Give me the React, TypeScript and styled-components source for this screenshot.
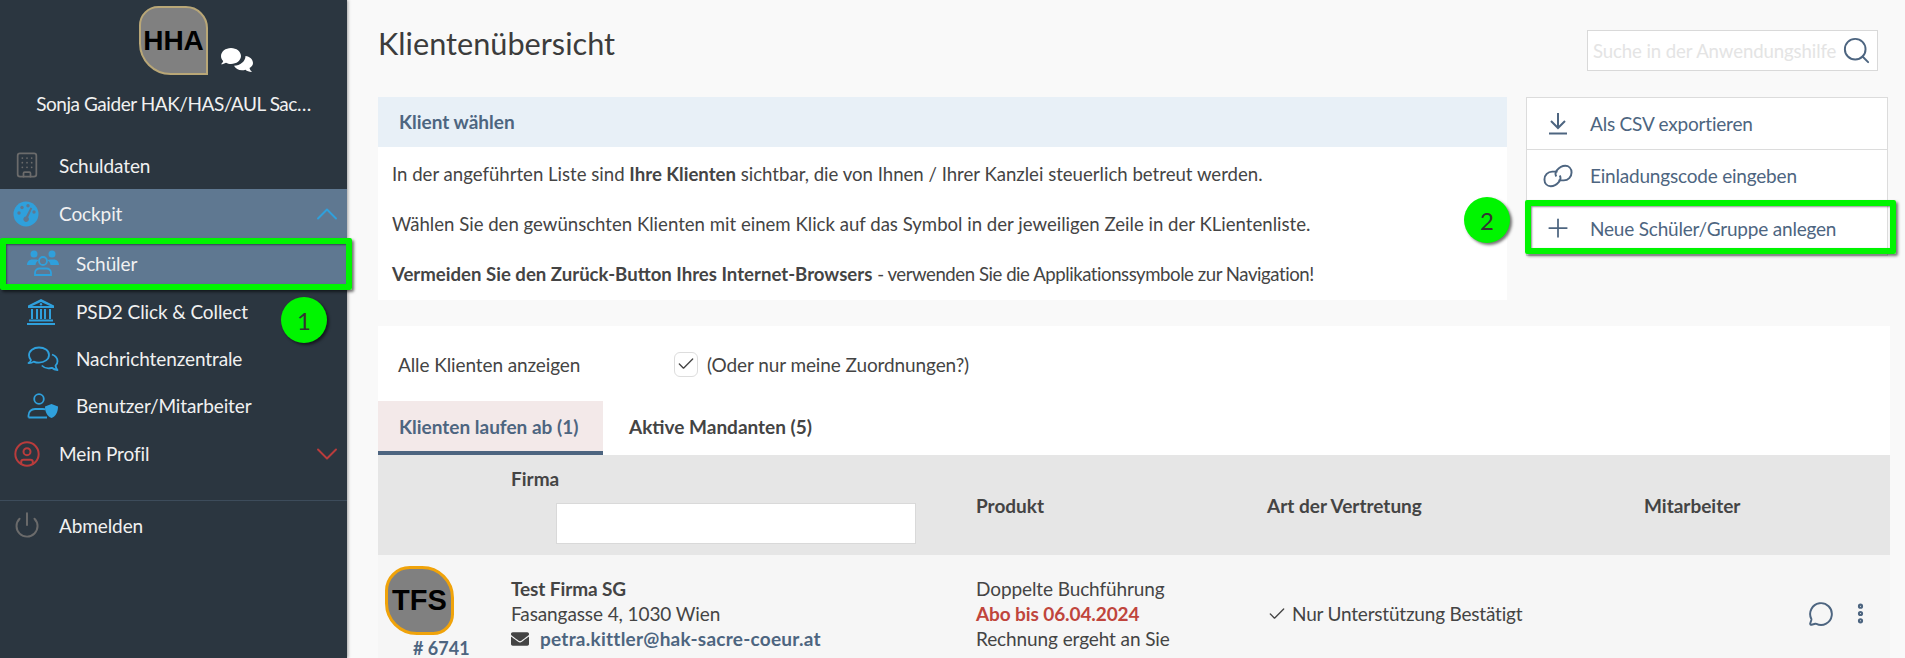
import styled, { createGlobalStyle } from "styled-components";
import {
  Building,
  CircleUser,
  Power,
  ChevronUp,
  ChevronDown,
  Search,
  Plus,
  Check,
  MessageCircle,
  EllipsisVertical,
} from "lucide-react";
import { FaEnvelope } from "react-icons/fa";

const GlobalStyle = createGlobalStyle`
  html, body {
    margin: 0;
    padding: 0;
    height: 658px;
    overflow: hidden;
    background: #f9f9f9;
    font-family: Lato, "Noto Sans", sans-serif;
    font-size: 19px;
    color: #444;
  }
  * { box-sizing: border-box; }
`;

const Page = styled.div`
  display: flex;
  height: 658px;
  overflow: hidden;
  position: relative;
`;

const Sidebar = styled.aside`
  width: 347px;
  flex: none;
  background: #2b3640;
  box-shadow: 1px 0 3px rgba(0, 0, 0, 0.35);
  color: #f1f1f1;
  position: relative;
  letter-spacing: -0.1px;
`;

const Brand = styled.div`
  display: flex;
  flex-direction: column;
  align-items: center;
  height: 141px;
  padding-top: 6px;
`;

const BrandTop = styled.div`
  display: flex;
  align-items: flex-end;
  gap: 12px;
  margin-left: 46px;
`;

const Avatar = styled.div<{ $color: string; $size: number; $fs: number }>`
  width: ${(p) => p.$size}px;
  height: ${(p) => p.$size}px;
  background: #808080;
  border: 2px solid ${(p) => p.$color};
  border-radius: 28% 32% 0 46%;
  display: flex;
  align-items: center;
  justify-content: center;
  font-family: "Liberation Sans", Arial, sans-serif;
  font-weight: 700;
  font-size: ${(p) => p.$fs}px;
  color: #000;
`;

const TfsAvatar = styled(Avatar)`
  border-width: 3px;
  border-radius: 36% 46% 30% 46%;
`;

const BrandName = styled.div`
  margin-top: 16px;
  white-space: nowrap;
  line-height: 26px;
  text-align: center;
  letter-spacing: -0.45px;
`;

const NavRow = styled.div<{ $h: number; $active?: boolean; $sub?: boolean }>`
  height: ${(p) => p.$h}px;
  display: flex;
  align-items: center;
  position: relative;
  padding-left: ${(p) => (p.$sub ? 76 : 59)}px;
  background: ${(p) => (p.$active ? "#5f7891" : "transparent")};
`;

const NavIcon = styled.span<{ $sub?: boolean }>`
  position: absolute;
  left: ${(p) => (p.$sub ? 27 : 13)}px;
  top: 50%;
  transform: translateY(-50%);
  display: flex;
`;

const Caret = styled.span`
  position: absolute;
  right: 2px;
  top: 50%;
  transform: translateY(-50%);
  display: flex;
`;

const NavDivider = styled.div`
  height: 1px;
  background: #3d4c5b;
  margin-top: 22px;
`;

const Main = styled.main`
  flex: 1;
  min-width: 0;
  padding: 0 15px 0 31px;
`;

const TitleRow = styled.div`
  height: 97px;
  display: flex;
  justify-content: space-between;
  align-items: flex-start;
`;

const Title = styled.h1`
  margin: 24px 0 0;
  font-size: 30.7px;
  font-weight: 400;
  line-height: 40px;
  color: #3c3c3c;
`;

const HelpSearch = styled.div`
  margin-top: 30px;
  margin-right: 12px;
  width: 291px;
  height: 41px;
  background: #fff;
  border: 1px solid #d9d9d9;
  display: flex;
  align-items: center;
  justify-content: space-between;
  padding: 0 5px 0 5px;
  color: #e4e4e4;
  font-size: 18.6px;
  letter-spacing: -0.1px;
  white-space: nowrap;
`;

const InfoLayout = styled.div`
  display: flex;
  gap: 19px;
`;

const InfoPanel = styled.section`
  width: 1129px;
  height: 203px;
  background: #fff;
`;

const InfoHeader = styled.div`
  height: 50px;
  background: #e8f0f7;
  display: flex;
  align-items: center;
  padding-left: 21px;
  font-weight: 700;
  color: #4d6580;
  padding-bottom: 1px;
`;

const InfoBody = styled.div`
  padding: 15px 14px 0;
`;

const InfoLine = styled.p`
  margin: 0 0 26px;
  line-height: 24px;
  white-space: nowrap;
  font-size: 18.6px;
`;

const Tight = styled.span`
  letter-spacing: -0.45px;
`;

const ActionMenu = styled.div`
  width: 362px;
  height: 159px;
  background: #fff;
  border: 1px solid #dcdcdc;
  flex: none;
`;

const ActionRow = styled.div`
  height: 52px;
  display: flex;
  align-items: center;
  padding-left: 63px;
  position: relative;
  color: #4d6580;
  border-bottom: 1px solid #dcdcdc;
  letter-spacing: -0.2px;

  &:last-child {
    border-bottom: none;
  }
`;

const ActionIcon = styled.span`
  position: absolute;
  left: 16px;
  width: 30px;
  display: flex;
  justify-content: center;
`;

const ClientCard = styled.section`
  margin-top: 26px;
  background: #fff;
  height: 400px;
`;

const FilterRow = styled.div`
  height: 75px;
  display: flex;
  align-items: center;
  padding: 1px 0 0 20px;
  letter-spacing: -0.1px;
`;

const FilterLabel = styled.span`
  width: 276px;
`;

const CheckBox = styled.span`
  width: 24px;
  height: 25px;
  border: 1px solid #ddd;
  border-radius: 6px;
  display: flex;
  align-items: center;
  justify-content: center;
  margin-right: 9px;
`;

const Tabs = styled.div`
  display: flex;
  height: 54px;
`;

const Tab = styled.div<{ $active?: boolean }>`
  width: ${(p) => (p.$active ? "225px" : "auto")};
  padding: 0 0 ${(p) => (p.$active ? 0 : 4)}px ${(p) => (p.$active ? 21 : 26)}px;
  display: flex;
  align-items: center;
  font-weight: 700;
  white-space: nowrap;
  color: ${(p) => (p.$active ? "#4d6580" : "#444")};
  background: ${(p) => (p.$active ? "#f3e9e9" : "transparent")};
  border-bottom: ${(p) => (p.$active ? "4px solid #4d6580" : "none")};
`;

const columns = "133px 465px 291px 377px 1fr";

const TableHead = styled.div`
  display: grid;
  grid-template-columns: ${columns};
  height: 100px;
  background: #e6e6e6;
  font-weight: 700;
`;

const HeadCell = styled.div<{ $col: number }>`
  grid-column: ${(p) => p.$col};
  display: flex;
  align-items: center;
`;

const FirmaCell = styled.div`
  grid-column: 2;
  padding-top: 12px;
  line-height: 24px;
`;

const FirmaFilter = styled.div`
  width: 360px;
  height: 41px;
  margin: 12px 0 0 45px;
  background: #fff;
  border: 1px solid #d9d9d9;
`;

const TableRow = styled.div`
  display: grid;
  grid-template-columns: ${columns};
  height: 110px;
  background: #f6f6f6;
  line-height: 25px;
`;

const LogoCell = styled.div`
  padding: 11px 0 0 7px;
  position: relative;
`;

const ClientNumber = styled.div`
  position: absolute;
  left: 35px;
  top: 81px;
  color: #4d6580;
  font-weight: 700;
  font-size: 18px;
  white-space: nowrap;
`;

const TextCell = styled.div`
  padding-top: 21px;
  white-space: nowrap;
  letter-spacing: -0.1px;
`;

const Bold = styled.div`
  font-weight: 700;
`;

const Expired = styled.div`
  font-weight: 700;
  color: #c0453c;
`;

const MailLine = styled.div`
  display: flex;
  align-items: center;
  gap: 11px;
  font-weight: 700;
  color: #4d6580;
  letter-spacing: 0.25px;
`;

const VertretungCell = styled.div`
  padding-top: 46px;
  display: flex;
  align-items: flex-start;
  gap: 5px;
  white-space: nowrap;
  letter-spacing: -0.2px;
`;

const CheckMark = styled.span`
  display: flex;
  margin-top: 3px;
`;

const RowActions = styled.div`
  padding: 46px 17px 0 0;
  display: flex;
  justify-content: flex-end;
  gap: 14px;
  color: #4d6580;
`;

const Highlight = styled.div`
  position: absolute;
  border: 6px solid #00f500;
  box-shadow: 2px 2px 3px rgba(0, 0, 0, 0.55), inset 1px 1px 2px rgba(0, 0, 0, 0.45);
  border-radius: 2px;
  pointer-events: none;
`;

const SchuelerHighlight = styled(Highlight)`
  left: 0;
  top: 238px;
  width: 352px;
  height: 52px;
`;

const NeuHighlight = styled(Highlight)`
  left: 1525px;
  top: 200px;
  width: 371px;
  height: 54px;
`;

const Badge = styled.div`
  position: absolute;
  width: 46px;
  height: 46px;
  border-radius: 50%;
  background: #00f500;
  box-shadow: 2px 2px 3px rgba(0, 0, 0, 0.55);
  display: flex;
  align-items: center;
  justify-content: center;
  color: #333;
  font-size: 24px;
`;

const BadgeOne = styled(Badge)`
  left: 281px;
  top: 297px;
`;

const BadgeTwo = styled(Badge)`
  left: 1464px;
  top: 197px;
`;

const BLUE = "#2fa0dc";
const SLATE = "#4d6580";

const Chats = () => (
  <svg width="34" height="28" viewBox="0 0 34 28" fill="#fff">
    <path d="M11 1C5.500 1 1 4.600 1 9c0 1.900.8 3.600 2.200 5-.4 1.300-1.300 2.400-2.200 3.200 1.800 0 3.600-.6 5-1.500 1.500.8 3.200 1.300 5 1.300 5.500 0 10-3.600 10-8S16.500 1 11 1z" />
    <path d="M33 16c0-3.600-3.300-6.600-7.500-7-.1 5.400-5.200 9.600-11.500 9.800 1.300 2.700 4.400 4.500 8 4.500 1.200 0 2.400-.2 3.500-.6 1.500 1.400 3.300 2.100 6.500 2.300-1.200-1-2.200-2.400-2.500-3.900C31.800 19.800 33 18 33 16z" />
  </svg>
);

const GaugeIcon = () => (
  <svg width="26" height="26" viewBox="0 0 26 26">
    <circle cx="13" cy="13" r="12.500" fill={BLUE} />
    <g fill="#5f7891">
      <circle cx="6" cy="12" r="1.700" />
      <circle cx="9" cy="6.500" r="1.700" />
      <circle cx="15" cy="4.800" r="1.700" />
      <circle cx="21" cy="11" r="1.700" />
      <path d="M17.500 6.500l1.700.8-4 9a2.800 2.800 0 1 1-2.300-.9z" />
    </g>
  </svg>
);

const PeopleIcon = () => (
  <svg width="32" height="26" viewBox="0 0 32 26" fill={BLUE}>
    <circle cx="7" cy="4" r="3.500" />
    <circle cx="25" cy="4" r="3.500" />
    <path d="M0 15c0-3.300 2.500-5.500 5-5.500h4c1 0 1.800.3 2.500.8-1.700 1.100-2.800 2.800-3 4.700z" />
    <path d="M32 15c0-3.300-2.500-5.500-5-5.500h-4c-1 0-1.800.3-2.500.8 1.700 1.100 2.800 2.800 3 4.700z" />
    <circle cx="16" cy="11" r="4" fill="none" stroke={BLUE} strokeWidth="1.800" />
    <path d="M8 25v-2c0-2.800 2.200-4.500 4.500-4.500h7c2.300 0 4.500 1.700 4.500 4.500v2z" fill="none" stroke={BLUE} strokeWidth="1.800" />
  </svg>
);

const BankIcon = () => (
  <svg width="28" height="26" viewBox="0 0 28 26" fill={BLUE}>
    <path d="M14 0L27 6.500V9H1V6.500zM14 3L5 7h18z" fillRule="evenodd" />
    <circle cx="14" cy="5.300" r="1.200" />
    <rect x="4" y="10" width="2" height="10" />
    <rect x="9" y="10" width="2" height="10" />
    <rect x="13" y="10" width="2" height="10" />
    <rect x="17" y="10" width="2" height="10" />
    <rect x="22" y="10" width="2" height="10" />
    <rect x="2" y="20.500" width="24" height="2" />
    <rect x="0" y="24" width="28" height="2" />
  </svg>
);

const ChatsOutline = () => (
  <svg width="32" height="26" viewBox="0 0 32 26" fill="none" stroke={BLUE} strokeWidth="1.800" strokeLinejoin="round">
    <path d="M12 1.500C6.500 1.500 2 5 2 9.300c0 1.800.8 3.500 2 4.800-.3 1.200-1.200 2.300-2.500 3 2 .1 3.900-.5 5.200-1.500 1.500.7 3.300 1.100 5.300 1.100 5.500 0 10-3.500 10-7.800S17.500 1.500 12 1.500z" />
    <path d="M25 8.500c3.300 1.300 5.500 3.800 5.500 6.700 0 1.800-.7 3.300-2 4.500.3 1.500 1 3 2 4.300-2.500-.2-4.300-1-5.700-2.200-3.800 1-7.800 0-10-2.300" />
  </svg>
);

const UserShield = () => (
  <svg width="32" height="26" viewBox="0 0 32 26" fill="none" stroke={BLUE} strokeWidth="1.800">
    <circle cx="12" cy="6" r="4.800" />
    <path d="M1.500 24.500v-2c0-4 3-6.500 6.500-6.500h8c1 0 1.700.1 2.500.4M1.500 24.500H20" />
    <path d="M24.500 11l6.500 2.500c0 5.500-2 9.500-6.500 11.500-4.500-2-6.500-6-6.500-11.500z" fill={BLUE} stroke="none" />
  </svg>
);

const DownloadIcon = () => (
  <svg width="20" height="23" viewBox="0 0 20 23" fill="none" stroke={SLATE} strokeWidth="2">
    <path d="M10 1v14M3 9l7 7 7-7" />
    <path d="M1 21.500h18" />
  </svg>
);

const ChainIcon = () => (
  <svg width="31" height="24" viewBox="0 0 31 24" fill="none" stroke={SLATE} strokeWidth="2">
    <path d="M15 7.500l-5.500 0C5 7.500 1.500 11 1.500 15.500 1.500 20 4.500 22.500 8 22.500c3.500 0 6-1.500 8.500-4.500 1.800-2.200 2-4.500.8-6.500" />
    <path d="M16 16.500l5.500 0C26 16.500 29.500 13 29.500 8.500 29.500 4 26.500 1.500 23 1.500c-3.500 0-6 1.500-8.500 4.500-1.800 2.200-2 4.500-.8 6.500" />
  </svg>
);

const App = () => {
  return (
    <Page>
      <GlobalStyle />
      <Sidebar>
        <Brand>
          <BrandTop>
            <Avatar $color="#b9a777" $size={69} $fs={28}>HHA</Avatar>
            <Chats />
          </BrandTop>
          <BrandName>Sonja Gaider HAK/HAS/AUL Sac…</BrandName>
        </Brand>
        <NavRow $h={48}>
          <NavIcon><Building size={28} color="#6b6b6b" strokeWidth={1.5} /></NavIcon>
          Schuldaten
        </NavRow>
        <NavRow $h={49} $active>
          <NavIcon><GaugeIcon /></NavIcon>
          Cockpit
          <Caret><ChevronUp size={36} color={BLUE} strokeWidth={1.3} /></Caret>
        </NavRow>
        <NavRow $h={50} $active $sub>
          <NavIcon $sub><PeopleIcon /></NavIcon>
          Schüler
        </NavRow>
        <NavRow $h={47} $sub>
          <NavIcon $sub><BankIcon /></NavIcon>
          PSD2 Click &amp; Collect
        </NavRow>
        <NavRow $h={47} $sub>
          <NavIcon $sub><ChatsOutline /></NavIcon>
          Nachrichtenzentrale
        </NavRow>
        <NavRow $h={47} $sub>
          <NavIcon $sub><UserShield /></NavIcon>
          Benutzer/Mitarbeiter
        </NavRow>
        <NavRow $h={49}>
          <NavIcon><CircleUser size={28} color="#b93c3c" strokeWidth={1.7} /></NavIcon>
          Mein Profil
          <Caret><ChevronDown size={36} color="#b93c3c" strokeWidth={1.3} /></Caret>
        </NavRow>
        <NavDivider />
        <NavRow $h={48}>
          <NavIcon><Power size={28} color="#6b6b6b" strokeWidth={1.7} /></NavIcon>
          Abmelden
        </NavRow>
      </Sidebar>

      <Main>
        <TitleRow>
          <Title>Klientenübersicht</Title>
          <HelpSearch>
            Suche in der Anwendungshilfe
            <Search size={31} color={SLATE} strokeWidth={1.5} />
          </HelpSearch>
        </TitleRow>

        <InfoLayout>
          <InfoPanel>
            <InfoHeader>Klient wählen</InfoHeader>
            <InfoBody>
              <InfoLine>
                In der angeführten Liste sind <b>Ihre Klienten</b> sichtbar, die von Ihnen / Ihrer Kanzlei steuerlich betreut werden.
              </InfoLine>
              <InfoLine>
                Wählen Sie den gewünschten Klienten mit einem Klick auf das Symbol in der jeweiligen Zeile in der KLientenliste.
              </InfoLine>
              <InfoLine>
                <b>Vermeiden Sie den Zurück-Button Ihres Internet-Browsers</b> <Tight>- verwenden Sie die Applikationssymbole zur Navigation!</Tight>
              </InfoLine>
            </InfoBody>
          </InfoPanel>
          <ActionMenu>
            <ActionRow>
              <ActionIcon><DownloadIcon /></ActionIcon>
              Als CSV exportieren
            </ActionRow>
            <ActionRow>
              <ActionIcon><ChainIcon /></ActionIcon>
              Einladungscode eingeben
            </ActionRow>
            <ActionRow>
              <ActionIcon><Plus size={36} color={SLATE} strokeWidth={1.4} /></ActionIcon>
              Neue Schüler/Gruppe anlegen
            </ActionRow>
          </ActionMenu>
        </InfoLayout>

        <ClientCard>
          <FilterRow>
            <FilterLabel>Alle Klienten anzeigen</FilterLabel>
            <CheckBox><Check size={20} color="#444" strokeWidth={1.6} /></CheckBox>
            (Oder nur meine Zuordnungen?)
          </FilterRow>
          <Tabs>
            <Tab $active>Klienten laufen ab (1)</Tab>
            <Tab>Aktive Mandanten (5)</Tab>
          </Tabs>
          <TableHead>
            <FirmaCell>
              Firma
              <FirmaFilter />
            </FirmaCell>
            <HeadCell $col={3}>Produkt</HeadCell>
            <HeadCell $col={4}>Art der Vertretung</HeadCell>
            <HeadCell $col={5}>Mitarbeiter</HeadCell>
          </TableHead>
          <TableRow>
            <LogoCell>
              <TfsAvatar $color="#f0a30a" $size={69} $fs={29}>TFS</TfsAvatar>
              <ClientNumber># 6741</ClientNumber>
            </LogoCell>
            <TextCell>
              <Bold>Test Firma SG</Bold>
              <div>Fasangasse 4, 1030 Wien</div>
              <MailLine>
                <FaEnvelope size={18} color="#444" />
                petra.kittler@hak-sacre-coeur.at
              </MailLine>
            </TextCell>
            <TextCell>
              <div>Doppelte Buchführung</div>
              <Expired>Abo bis 06.04.2024</Expired>
              <div>Rechnung ergeht an Sie</div>
            </TextCell>
            <VertretungCell>
              <CheckMark><Check size={20} color="#444" strokeWidth={1.6} /></CheckMark>
              Nur Unterstützung Bestätigt
            </VertretungCell>
            <RowActions>
              <MessageCircle size={26} strokeWidth={1.8} />
              <EllipsisVertical size={25} strokeWidth={3} />
            </RowActions>
          </TableRow>
        </ClientCard>
      </Main>

      <SchuelerHighlight />
      <NeuHighlight />
      <BadgeOne>1</BadgeOne>
      <BadgeTwo>2</BadgeTwo>
    </Page>
  );
};

export default App;
